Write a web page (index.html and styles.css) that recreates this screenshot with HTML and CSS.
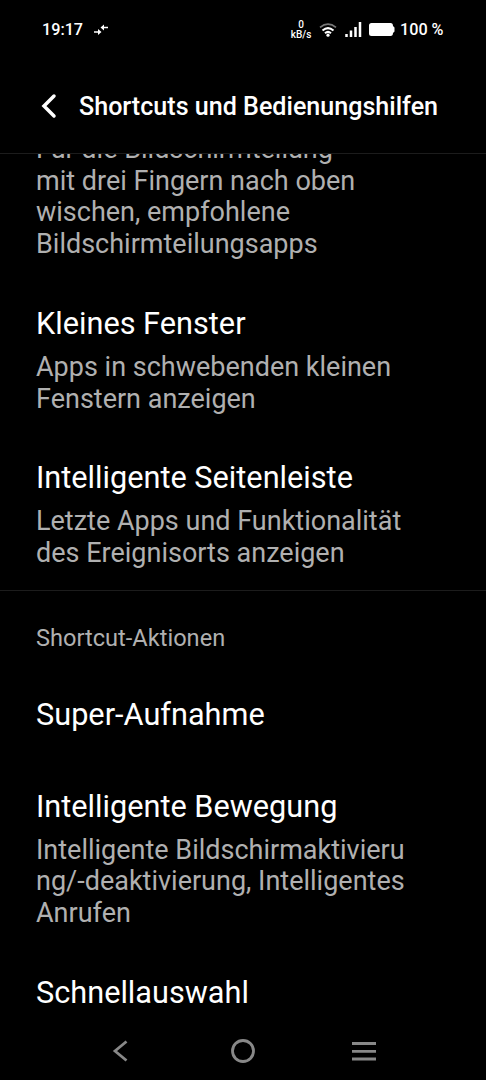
FILE: index.html
```html
<!DOCTYPE html>
<html lang="de">
<head>
<meta charset="utf-8">
<title>Shortcuts und Bedienungshilfen</title>
<link rel="stylesheet" href="styles.css">
</head>
<body>
<div class="phone">
  <div class="status">
    <span class="time">19:17</span>
    <svg class="arrows" width="16" height="14" viewBox="0 0 16 14"><path d="M1 9H6M9 4.500h6" fill="none" stroke="#fff" stroke-width="1.700"/><path d="M5 6l3.500 3L5 12zM11 1.500L7.500 4.500 11 7.500z" fill="#fff"/></svg>
    <span class="speed"><span>0</span><span>kB/s</span></span>
    <svg class="wifi" width="18" height="14" viewBox="0 0 18 14"><path d="M1 4.300Q9-2 17 4.300" fill="none" stroke="#777" stroke-width="1.700"/><path d="M3.500 7.500Q9 2.800 14.500 7.500M6 10.300Q9 7.500 12 10.300" fill="none" stroke="#fff" stroke-width="2"/><circle cx="9" cy="12.200" r="1.600" fill="#fff"/></svg>
    <svg class="signal" width="17" height="15" viewBox="0 0 17 15"><path d="M1.500 15v-3M6 15V8.500M10.500 15V5M15 15V0" stroke="#fff" stroke-width="2.500"/></svg>
    <svg class="battery" width="26" height="13" viewBox="0 0 26 13"><path d="M2.500 0H21.500Q24 0 24 3L25.500 4.500V8.500L24 10Q24 13 21.500 13H2.500Q0 13 0 10.500V2.500Q0 0 2.500 0Z" fill="#fff"/></svg>
    <span class="percent">100 %</span>
  </div>
  <header class="header">
    <svg class="back" width="16" height="26" viewBox="0 0 16 26"><path d="M13 3L3 13l10 10" fill="none" stroke="#fff" stroke-width="3.500" stroke-linecap="round"/></svg>
    <h1>Shortcuts und Bedienungshilfen</h1>
  </header>
  <main class="content">
    <section class="item first"><p>Für die Bildschirmteilung<br>mit drei Fingern nach oben<br>wischen, empfohlene<br>Bildschirmteilungsapps</p></section>
    <section class="item"><h2>Kleines Fenster</h2><p>Apps in schwebenden kleinen<br>Fenstern anzeigen</p></section>
    <section class="item last"><h2>Intelligente Seitenleiste</h2><p>Letzte Apps und Funktionalität<br>des Ereignisorts anzeigen</p></section>
    <h3 class="group">Shortcut-Aktionen</h3>
    <section class="item single"><h2>Super-Aufnahme</h2></section>
    <section class="item"><h2>Intelligente Bewegung</h2><p>Intelligente Bildschirmaktivieru<br>ng/-deaktivierung, Intelligentes<br>Anrufen</p></section>
    <section class="item"><h2>Schnellauswahl</h2></section>
  </main>
  <nav class="nav">
    <svg width="26" height="26" viewBox="0 0 26 26"><path d="M18.500 3.500L7 13 18.500 22.500"/></svg>
    <svg width="26" height="26" viewBox="0 0 26 26"><circle cx="13" cy="13" r="10.500"/></svg>
    <svg width="26" height="26" viewBox="0 0 26 26"><path d="M1 5.500h24M1 13.300h24M1 21h24"/></svg>
  </nav>
</div>
</body>
</html>
```
FILE: styles.css
```css
* { box-sizing: border-box; }
body { margin: 0; background: #000; font-family: Roboto, sans-serif; }
h1, h2, h3, p { margin: 0; }
svg { flex: none; }
.phone { width: 486px; height: 1080px; display: flex; flex-direction: column; overflow: hidden; background: #000; color: #fff; }
.status { height: 59px; flex: none; display: flex; align-items: center; padding-left: 42px; font-size: 16.2px; font-weight: 500; white-space: nowrap; }
.time { width: 51px; }
.speed { width: 20px; margin-left: 182px; font-size: 10px; line-height: 10px; display: flex; flex-direction: column; align-items: center; }
.wifi { margin-left: 8px; }
.signal { margin-left: 8px; }
.battery { margin-left: 7px; }
.percent { margin-left: 5px; }
.header { height: 95px; flex: none; display: flex; align-items: center; padding-left: 41px; border-bottom: 1px solid #1c1c1c; }
.header h1 { margin: 2px 0 0 22px; font-size: 25.1px; font-weight: 500; line-height: 32px; white-space: nowrap; }
.content { flex: 1; min-height: 0; overflow: hidden; }
.item { padding: 0 36px 45px; white-space: nowrap; }
.item h2 { font-size: 30.7px; font-weight: 400; line-height: 36px; margin-bottom: 10px; }
.item p { font-size: 27px; line-height: 31.7px; color: #b0b0b0; }
.first { margin-top: -20px; }
.last { padding-bottom: 20px; }
.group { height: 107px; padding: 0 36px; border-top: 1px solid #1c1c1c; line-height: 94px; font-size: 23.6px; font-weight: 400; color: #b0b0b0; }
.single { padding-bottom: 46px; }
.nav { height: 58px; flex: none; display: flex; justify-content: space-between; padding: 16px 109px 0 108px; }
.nav svg { fill: none; stroke: #888; stroke-width: 2.8; }
```
